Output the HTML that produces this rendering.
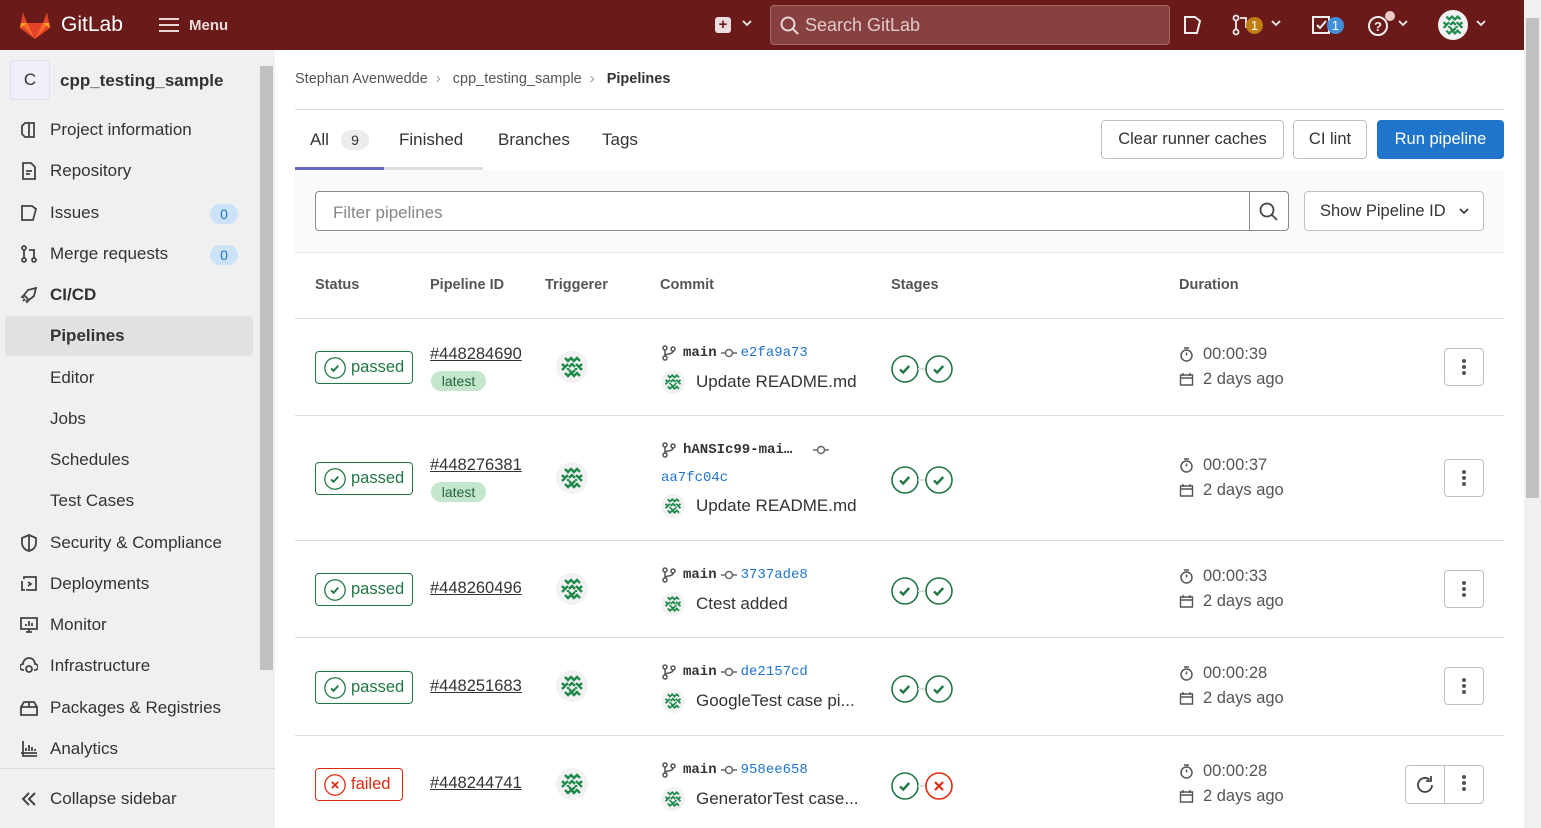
<!DOCTYPE html>
<html><head><meta charset="utf-8"><style>
*{box-sizing:border-box;margin:0;padding:0}
body{width:1541px;height:828px;overflow:hidden;font-family:"Liberation Sans",sans-serif;color:#333;background:#fff;position:relative}
.a{position:absolute}
.hdr{left:0;top:0;width:1524px;height:50px;background:#6b1a1a;color:#fff}
.sb{left:0;top:50px;width:275px;height:778px;background:#f0f0f0}
.nav{position:absolute;left:20px;font-size:17px;color:#333;display:flex;align-items:center}
.nav svg{width:18px;height:18px;margin-right:12px;fill:none;stroke:#444;stroke-width:1.8}
.sub{position:absolute;left:50px;font-size:17px;color:#333}
.cnt{position:absolute;left:210px;width:28px;height:20px;border-radius:10px;background:#cbe2f9;color:#1f75cb;font-size:14px;text-align:center;line-height:20px}
.th{position:absolute;top:277px;font-size:14.5px;font-weight:bold;color:#555}
.line{position:absolute;left:295px;width:1209px;height:1px;background:#dcdcdc}
.st{position:absolute;left:315px;width:98px;height:33px;border:1px solid #217645;border-radius:4px;color:#217645;font-size:16.5px;display:flex;align-items:center;padding-left:8px}
.st.f{border-color:#dd2b0e;color:#dd2b0e;width:88px}
.st svg{margin-right:5px}
.pid{position:absolute;left:430px;font-size:16.5px;color:#333;text-decoration:underline}
.lat{position:absolute;left:431px;width:55px;height:20px;border-radius:10px;background:#c3e6cd;color:#24663b;font-size:14px;text-align:center;line-height:20px}
.av{position:absolute}
.br{position:absolute;left:661px;font-family:"Liberation Mono",monospace;font-size:14px;display:flex;align-items:center;white-space:nowrap}
.br b{color:#333;margin:0 4px 0 6px}
.br i{font-style:normal;color:#1f75cb;margin-left:4px}
.cm{position:absolute;left:661px;font-size:17px;color:#333;display:flex;align-items:center;white-space:nowrap}
.cm svg{margin-right:11px}
.sg{position:absolute;left:891px;display:flex;align-items:center}
.dur{position:absolute;left:1179px;font-size:16.5px;color:#555;display:flex;align-items:center}
.dur svg{margin-right:9px}
.kb{position:absolute;left:1444px;width:40px;height:38px;border:1px solid #bfbfbf;border-radius:4px;display:flex;align-items:center;justify-content:center}
.dot{width:4px;height:4px;border-radius:2px;background:#555;margin:2px 0}
.chev{position:absolute;top:20px}
</style></head><body>
<svg width="0" height="0" style="position:absolute"><defs>
<g id="av"><circle cx="16" cy="16" r="16" fill="#f2f2f2"/><g fill="none" stroke="#1f8a4c" stroke-width="2.4"><path d="M9 7l3 3 3-3 3 3 3-3 3 3M6 13l3 3 3-3M20 13l3 3 3-3M13 16l3-3 3 3 M6 19l3-3M23 16l3 3M13 19l3 3 3-3M9 22l3 3 3-3 3 3 3-3 3 3M12 19v-2M20 19v-2"/></g></g>
<g id="ok"><circle cx="14" cy="14" r="13" fill="#fff" stroke="#217645" stroke-width="1.6"/><path d="M9 14.5l3.2 3 6-6.5" fill="none" stroke="#217645" stroke-width="2.4"/></g>
<g id="x"><circle cx="14" cy="14" r="13" fill="#fff" stroke="#dd2b0e" stroke-width="1.6"/><path d="M10 10l8 8M18 10l-8 8" stroke="#dd2b0e" stroke-width="2.2"/></g>
<g id="br"><circle cx="4" cy="3" r="2" fill="none" stroke="#555" stroke-width="1.5"/><circle cx="4" cy="13" r="2" fill="none" stroke="#555" stroke-width="1.5"/><circle cx="12" cy="4" r="2" fill="none" stroke="#555" stroke-width="1.5"/><path d="M4 5v6M12 6c0 4-8 2-8 5" fill="none" stroke="#555" stroke-width="1.5"/></g>
<g id="cmt"><circle cx="8" cy="6" r="3.5" fill="none" stroke="#666" stroke-width="1.5"/><path d="M0 6h4.5M11.5 6H16" stroke="#666" stroke-width="1.5"/></g>
<g id="ch"><path d="M1 1l4 4 4-4" fill="none" stroke="#eee" stroke-width="1.8"/></g>
</defs></svg>

<div class="a hdr">
  <svg class="a" style="left:20px;top:12px" width="30" height="27" viewBox="0 0 30 27"><path d="M15 27L0 16 3 0l4 11h16L27 0l3 16z" fill="#e24329"/><path d="M15 27L7 11H1z" fill="#fc6d26"/><path d="M15 27l8-16h6z" fill="#fc6d26"/><path d="M15 27L7 11h16z" fill="#e24329"/><path d="M0 16l1-5 6 0z M30 16l-1-5-6 0z" fill="#fca326"/></svg>
  <div class="a" style="left:61px;top:13px;font-size:21px">GitLab</div>
  <svg class="a" style="left:159px;top:17px" width="20" height="16"><path d="M0 2h20M0 8h20M0 14h20" stroke="#e9d6d6" stroke-width="2"/></svg>
  <div class="a" style="left:189px;top:17px;font-size:15px;font-weight:bold;color:#eadada">Menu</div>
  <div class="a" style="left:715px;top:17px;width:16px;height:16px;background:#ecdede;border-radius:3px;color:#6b1a1a;font-size:15px;font-weight:bold;line-height:16px;text-align:center">+</div>
  <svg class="chev" style="left:742px" width="10" height="7"><use href="#ch"/></svg>
  <div class="a" style="left:770px;top:5px;width:400px;height:40px;background:#874140;border:1px solid #a76a69;border-radius:4px"></div>
  <svg class="a" style="left:780px;top:16px" width="20" height="20"><circle cx="8" cy="8" r="6.5" fill="none" stroke="#e9d6d6" stroke-width="2"/><path d="M13 13l5 5" stroke="#e9d6d6" stroke-width="2"/></svg>
  <div class="a" style="left:805px;top:15px;font-size:18px;color:#e2c9c9">Search GitLab</div>
  <svg class="a" style="left:1183px;top:15px" width="20" height="20"><path d="M2 2h10l5 4-3 12H2z" fill="none" stroke="#eee" stroke-width="2"/></svg>
  <svg class="a" style="left:1232px;top:14px" width="20" height="22"><circle cx="4" cy="4" r="2.5" fill="none" stroke="#eee" stroke-width="1.8"/><circle cx="4" cy="18" r="2.5" fill="none" stroke="#eee" stroke-width="1.8"/><path d="M4 6v10M8 4h6v10" fill="none" stroke="#eee" stroke-width="1.8"/></svg>
  <div class="a" style="left:1246px;top:17px;width:17px;height:17px;border-radius:9px;background:#c17d10;font-size:13px;text-align:center;line-height:17px">1</div>
  <svg class="chev" style="left:1271px" width="10" height="7"><use href="#ch"/></svg>
  <svg class="a" style="left:1312px;top:15px" width="20" height="20"><path d="M1 2h16v16H1z" fill="none" stroke="#eee" stroke-width="2"/><path d="M5 10l3 3 6-7" fill="none" stroke="#eee" stroke-width="2"/></svg>
  <div class="a" style="left:1327px;top:17px;width:17px;height:17px;border-radius:9px;background:#428fdc;font-size:13px;text-align:center;line-height:17px">1</div>
  <svg class="a" style="left:1368px;top:14px" width="22" height="22"><circle cx="10" cy="12" r="9" fill="none" stroke="#eee" stroke-width="2"/><text x="6" y="17" font-size="13" fill="#eee" font-family="Liberation Sans" font-weight="bold">?</text></svg>
  <div class="a" style="left:1385px;top:11px;width:10px;height:10px;border-radius:5px;background:#f1c9c9"></div>
  <svg class="chev" style="left:1398px" width="10" height="7"><use href="#ch"/></svg>
  <svg class="a" style="left:1438px;top:10px" width="30" height="30" viewBox="0 0 32 32"><use href="#av"/></svg>
  <svg class="chev" style="left:1476px" width="10" height="7"><use href="#ch"/></svg>
</div>
<div class="a" style="left:1524px;top:0;width:17px;height:828px;background:#f0f0f0"></div>
<div class="a" style="left:1526px;top:18px;width:13px;height:480px;background:#c1c1c1"></div>

<div class="a sb">
  <div class="a" style="left:259px;top:0;width:15px;height:720px;background:#f0f0f0"></div>
  <div class="a" style="left:260px;top:16px;width:13px;height:604px;background:#c1c1c1"></div>
  <div class="a" style="left:10px;top:10px;width:40px;height:40px;border:1px solid #e0e0ee;background:#f0f0fa;border-radius:4px;text-align:center;line-height:38px;font-size:17px;color:#333">C</div>
  <div class="a" style="left:60px;top:21px;font-size:17px;font-weight:bold;color:#333">cpp_testing_sample</div>
  <div class="nav" style="top:70px"><svg viewBox="0 0 18 18"><path d="M5 2l9 0v14H5L2 13V5z M9 2v14"/></svg>Project information</div>
  <div class="nav" style="top:111px"><svg viewBox="0 0 18 18"><path d="M3 1h8l4 4v12H3z M6 9h6M6 12h4"/></svg>Repository</div>
  <div class="nav" style="top:153px"><svg viewBox="0 0 18 18"><path d="M2 2h10l4 3-3 11H2z"/></svg>Issues</div>
  <div class="cnt" style="top:154px">0</div>
  <div class="nav" style="top:194px"><svg viewBox="0 0 18 18"><circle cx="4" cy="3" r="2"/><circle cx="4" cy="15" r="2"/><circle cx="14" cy="15" r="2"/><path d="M4 5v8M14 13V5H9"/></svg>Merge requests</div>
  <div class="cnt" style="top:195px">0</div>
  <div class="nav" style="top:235px;font-weight:bold"><svg viewBox="0 0 18 18"><path d="M16 2L8 4 4 9l5 5 5-4zM4 9l-2 2 2 1M9 14l-2 2-1-2M3 15l2-2"/></svg>CI/CD</div>
  <div class="a" style="left:5px;top:266px;width:248px;height:40px;background:#e1e1e4;border-radius:4px"></div>
  <div class="sub" style="top:276px;font-weight:bold">Pipelines</div>
  <div class="sub" style="top:318px">Editor</div>
  <div class="sub" style="top:359px">Jobs</div>
  <div class="sub" style="top:400px">Schedules</div>
  <div class="sub" style="top:441px">Test Cases</div>
  <div class="nav" style="top:483px"><svg viewBox="0 0 18 18"><path d="M9 1l7 3v5c0 4-3 7-7 8-4-1-7-4-7-8V4z M9 1v16"/></svg>Security &amp; Compliance</div>
  <div class="nav" style="top:524px"><svg viewBox="0 0 18 18"><path d="M4 4V2h12v13H6 M2 6v9h3 M8 7l3 2-3 2"/></svg>Deployments</div>
  <div class="nav" style="top:565px"><svg viewBox="0 0 18 18"><path d="M1 2h16v11H1z M6 16h6M9 13v3M6 10V8M9 10V5M12 10V7"/></svg>Monitor</div>
  <div class="nav" style="top:606px"><svg viewBox="0 0 18 18"><path d="M4 13H3a3 3 0 010-6 6 6 0 0112 0 3 3 0 010 6h-1"/><circle cx="9" cy="12" r="3"/></svg>Infrastructure</div>
  <div class="nav" style="top:648px"><svg viewBox="0 0 18 18"><path d="M1 8h16v8H1z M1 8l3-5h10l3 5M9 3v5"/></svg>Packages &amp; Registries</div>
  <div class="nav" style="top:689px"><svg viewBox="0 0 18 18"><path d="M3 1v15h14 M1 13h16 M6 11V8M9 11V5M12 11V7M15 11V9"/></svg>Analytics</div>
  <div class="a" style="left:0;top:718px;width:275px;height:1px;background:#dcdcdc"></div>
  <div class="nav" style="top:739px"><svg viewBox="0 0 18 18"><path d="M9 3L3 9l6 6M15 3L9 9l6 6" stroke-width="2"/></svg>Collapse sidebar</div>
</div>

<div class="a" style="left:295px;top:71px;font-size:14.5px;color:#555">Stephan Avenwedde &nbsp;<span style="color:#999">›</span>&nbsp;&nbsp; cpp_testing_sample &nbsp;<span style="color:#999">›</span>&nbsp;&nbsp; <b style="color:#333">Pipelines</b></div>
<div class="line" style="top:109px"></div>
<div class="a" style="left:310px;top:130px;font-size:17px;color:#333">All</div>
<div class="a" style="left:341px;top:130px;width:28px;height:20px;border-radius:10px;background:#ececec;font-size:14px;text-align:center;line-height:20px">9</div>
<div class="a" style="left:399px;top:130px;font-size:17px">Finished</div>
<div class="a" style="left:498px;top:130px;font-size:17px">Branches</div>
<div class="a" style="left:602px;top:130px;font-size:17px">Tags</div>
<div class="a" style="left:295px;top:167px;width:188px;height:3px;background:#dcdcdc"></div>
<div class="a" style="left:295px;top:167px;width:89px;height:3px;background:#6666c4"></div>
<div class="a" style="left:1101px;top:120px;width:183px;height:39px;border:1px solid #bfbfbf;border-radius:4px;font-size:16.5px;text-align:center;line-height:37px">Clear runner caches</div>
<div class="a" style="left:1293px;top:120px;width:74px;height:39px;border:1px solid #bfbfbf;border-radius:4px;font-size:16.5px;text-align:center;line-height:37px">CI lint</div>
<div class="a" style="left:1377px;top:120px;width:127px;height:39px;background:#1f75cb;border-radius:4px;font-size:16.5px;color:#fff;text-align:center;line-height:39px">Run pipeline</div>
<div class="a" style="left:295px;top:170px;width:1209px;height:83px;background:#fafafa;border-bottom:1px solid #e5e5e5"></div>
<div class="a" style="left:315px;top:191px;width:974px;height:40px;border:1px solid #8a8a8a;border-radius:4px;background:#fff"></div>
<div class="a" style="left:1249px;top:191px;width:1px;height:40px;background:#8a8a8a"></div>
<svg class="a" style="left:1259px;top:202px" width="20" height="20"><circle cx="8" cy="8" r="6.5" fill="none" stroke="#444" stroke-width="1.8"/><path d="M13 13l5 5" stroke="#444" stroke-width="1.8"/></svg>
<div class="a" style="left:333px;top:203px;font-size:17px;color:#868686">Filter pipelines</div>
<div class="a" style="left:1304px;top:191px;width:180px;height:40px;border:1px solid #bfbfbf;border-radius:4px;background:#fff;font-size:16.5px;line-height:38px;padding-left:15px">Show Pipeline ID</div>
<svg class="a" style="left:1459px;top:208px" width="10" height="7"><path d="M1 1l4 4 4-4" fill="none" stroke="#333" stroke-width="1.6"/></svg>

<div class="th" style="left:315px">Status</div>
<div class="th" style="left:430px">Pipeline ID</div>
<div class="th" style="left:545px">Triggerer</div>
<div class="th" style="left:660px">Commit</div>
<div class="th" style="left:891px">Stages</div>
<div class="th" style="left:1179px">Duration</div>
<div class="line" style="top:318px"></div>
<div class="line" style="top:415px"></div>
<div class="line" style="top:540px"></div>
<div class="line" style="top:637px"></div>
<div class="line" style="top:735px"></div>

<!-- row1 -->
<div class="st" style="top:351px"><svg width="22" height="22" viewBox="0 0 28 28"><use href="#ok"/></svg>passed</div>
<div class="pid" style="top:345px">#448284690</div>
<div class="lat" style="top:371px">latest</div>
<svg class="av" style="left:556px;top:351px" width="32" height="32"><use href="#av"/></svg>
<div class="br" style="top:345px"><svg width="16" height="16"><use href="#br"/></svg><b>main</b><svg width="16" height="12"><use href="#cmt"/></svg><i>e2fa9a73</i></div>
<div class="cm" style="top:370px"><svg width="24" height="24" viewBox="0 0 32 32"><use href="#av"/></svg>Update README.md</div>
<div class="sg" style="top:355px"><svg width="62" height="28"><use href="#ok"/><path d="M27 14h8" stroke="#ddd" stroke-width="2"/><use href="#ok" x="34"/></svg></div>
<div class="dur" style="top:345px"><svg width="15" height="15"><circle cx="7.5" cy="8.5" r="5.5" fill="none" stroke="#555" stroke-width="1.5"/><path d="M7.5 8.5V5.5M5 1h5" stroke="#555" stroke-width="1.5"/></svg>00:00:39</div>
<div class="dur" style="top:370px"><svg width="15" height="15"><path d="M1.5 3h12v10h-12zM1.5 6h12M4 1v3M11 1v3" fill="none" stroke="#555" stroke-width="1.4"/></svg>2 days ago</div>
<div class="kb" style="top:348px"><div><div class="dot"></div><div class="dot"></div><div class="dot"></div></div></div>

<!-- row2 -->
<div class="st" style="top:462px"><svg width="22" height="22" viewBox="0 0 28 28"><use href="#ok"/></svg>passed</div>
<div class="pid" style="top:456px">#448276381</div>
<div class="lat" style="top:482px">latest</div>
<svg class="av" style="left:556px;top:462px" width="32" height="32"><use href="#av"/></svg>
<div class="br" style="top:442px"><svg width="16" height="16"><use href="#br"/></svg><b>hANSIc99-mai…</b>&nbsp;&nbsp;<svg width="16" height="12"><use href="#cmt"/></svg></div>
<div class="br" style="top:470px;color:#1f75cb">aa7fc04c</div>
<div class="cm" style="top:494px"><svg width="24" height="24" viewBox="0 0 32 32"><use href="#av"/></svg>Update README.md</div>
<div class="sg" style="top:466px"><svg width="62" height="28"><use href="#ok"/><path d="M27 14h8" stroke="#ddd" stroke-width="2"/><use href="#ok" x="34"/></svg></div>
<div class="dur" style="top:456px"><svg width="15" height="15"><circle cx="7.5" cy="8.5" r="5.5" fill="none" stroke="#555" stroke-width="1.5"/><path d="M7.5 8.5V5.5M5 1h5" stroke="#555" stroke-width="1.5"/></svg>00:00:37</div>
<div class="dur" style="top:481px"><svg width="15" height="15"><path d="M1.5 3h12v10h-12zM1.5 6h12M4 1v3M11 1v3" fill="none" stroke="#555" stroke-width="1.4"/></svg>2 days ago</div>
<div class="kb" style="top:459px"><div><div class="dot"></div><div class="dot"></div><div class="dot"></div></div></div>

<!-- row3 -->
<div class="st" style="top:573px"><svg width="22" height="22" viewBox="0 0 28 28"><use href="#ok"/></svg>passed</div>
<div class="pid" style="top:579px">#448260496</div>
<svg class="av" style="left:556px;top:573px" width="32" height="32"><use href="#av"/></svg>
<div class="br" style="top:567px"><svg width="16" height="16"><use href="#br"/></svg><b>main</b><svg width="16" height="12"><use href="#cmt"/></svg><i>3737ade8</i></div>
<div class="cm" style="top:592px"><svg width="24" height="24" viewBox="0 0 32 32"><use href="#av"/></svg>Ctest added</div>
<div class="sg" style="top:577px"><svg width="62" height="28"><use href="#ok"/><path d="M27 14h8" stroke="#ddd" stroke-width="2"/><use href="#ok" x="34"/></svg></div>
<div class="dur" style="top:567px"><svg width="15" height="15"><circle cx="7.5" cy="8.5" r="5.5" fill="none" stroke="#555" stroke-width="1.5"/><path d="M7.5 8.5V5.5M5 1h5" stroke="#555" stroke-width="1.5"/></svg>00:00:33</div>
<div class="dur" style="top:592px"><svg width="15" height="15"><path d="M1.5 3h12v10h-12zM1.5 6h12M4 1v3M11 1v3" fill="none" stroke="#555" stroke-width="1.4"/></svg>2 days ago</div>
<div class="kb" style="top:570px"><div><div class="dot"></div><div class="dot"></div><div class="dot"></div></div></div>

<!-- row4 -->
<div class="st" style="top:671px"><svg width="22" height="22" viewBox="0 0 28 28"><use href="#ok"/></svg>passed</div>
<div class="pid" style="top:677px">#448251683</div>
<svg class="av" style="left:556px;top:670px" width="32" height="32"><use href="#av"/></svg>
<div class="br" style="top:664px"><svg width="16" height="16"><use href="#br"/></svg><b>main</b><svg width="16" height="12"><use href="#cmt"/></svg><i>de2157cd</i></div>
<div class="cm" style="top:689px"><svg width="24" height="24" viewBox="0 0 32 32"><use href="#av"/></svg>GoogleTest case pi...</div>
<div class="sg" style="top:675px"><svg width="62" height="28"><use href="#ok"/><path d="M27 14h8" stroke="#ddd" stroke-width="2"/><use href="#ok" x="34"/></svg></div>
<div class="dur" style="top:664px"><svg width="15" height="15"><circle cx="7.5" cy="8.5" r="5.5" fill="none" stroke="#555" stroke-width="1.5"/><path d="M7.5 8.5V5.5M5 1h5" stroke="#555" stroke-width="1.5"/></svg>00:00:28</div>
<div class="dur" style="top:689px"><svg width="15" height="15"><path d="M1.5 3h12v10h-12zM1.5 6h12M4 1v3M11 1v3" fill="none" stroke="#555" stroke-width="1.4"/></svg>2 days ago</div>
<div class="kb" style="top:667px"><div><div class="dot"></div><div class="dot"></div><div class="dot"></div></div></div>

<!-- row5 -->
<div class="st f" style="top:768px"><svg width="22" height="22" viewBox="0 0 28 28"><use href="#x"/></svg>failed</div>
<div class="pid" style="top:774px">#448244741</div>
<svg class="av" style="left:556px;top:768px" width="32" height="32"><use href="#av"/></svg>
<div class="br" style="top:762px"><svg width="16" height="16"><use href="#br"/></svg><b>main</b><svg width="16" height="12"><use href="#cmt"/></svg><i>958ee658</i></div>
<div class="cm" style="top:787px"><svg width="24" height="24" viewBox="0 0 32 32"><use href="#av"/></svg>GeneratorTest case...</div>
<div class="sg" style="top:772px"><svg width="62" height="28"><use href="#ok"/><path d="M27 14h8" stroke="#ddd" stroke-width="2"/><use href="#x" x="34"/></svg></div>
<div class="dur" style="top:762px"><svg width="15" height="15"><circle cx="7.5" cy="8.5" r="5.5" fill="none" stroke="#555" stroke-width="1.5"/><path d="M7.5 8.5V5.5M5 1h5" stroke="#555" stroke-width="1.5"/></svg>00:00:28</div>
<div class="dur" style="top:787px"><svg width="15" height="15"><path d="M1.5 3h12v10h-12zM1.5 6h12M4 1v3M11 1v3" fill="none" stroke="#555" stroke-width="1.4"/></svg>2 days ago</div>
<div class="a" style="left:1405px;top:765px;width:79px;height:39px;border:1px solid #bfbfbf;border-radius:4px"></div>
<div class="a" style="left:1444px;top:765px;width:1px;height:39px;background:#bfbfbf"></div>
<svg class="a" style="left:1414px;top:774px" width="22" height="22"><path d="M18 11a7 7 0 11-2.5-5.4" fill="none" stroke="#444" stroke-width="1.8"/><path d="M17 2v5h-5" fill="none" stroke="#444" stroke-width="1.8"/></svg>
<div class="a" style="left:1462px;top:773px"><div class="dot"></div><div class="dot"></div><div class="dot"></div></div>
</body></html>
